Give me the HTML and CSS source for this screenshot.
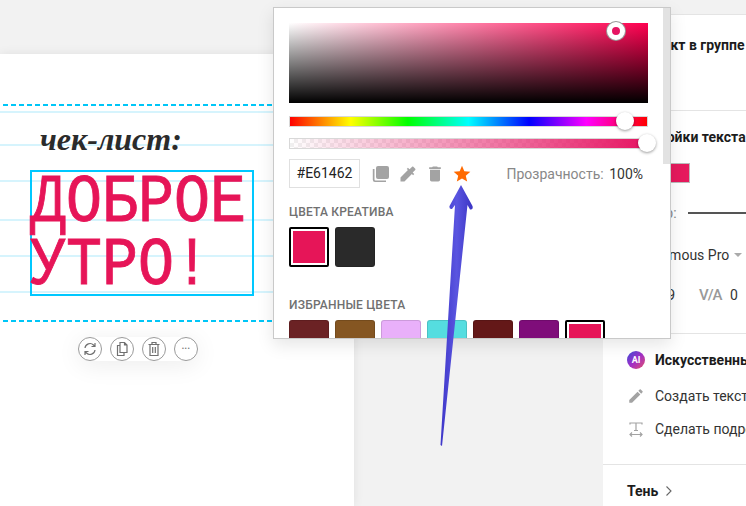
FILE: index.html
```html
<!DOCTYPE html>
<html lang="ru">
<head>
  <meta charset="UTF-8" />
  <meta name="viewport" content="width=device-width, initial-scale=1.0"/>
  <title>Редактор креатива</title>
  <link rel="stylesheet" href="styles.css">
</head>
<body>

<div class="app">
  <div class="sheet">
    <svg class="sheet-lines" width="354" height="452">
      <g class="rule">
        <line x1="0" y1="58" x2="354" y2="58"/>
        <line x1="0" y1="91" x2="354" y2="91"/>
        <line x1="0" y1="127" x2="354" y2="127"/>
        <line x1="0" y1="166" x2="354" y2="166"/>
        <line x1="0" y1="202" x2="354" y2="202"/>
        <line x1="0" y1="238" x2="354" y2="238"/>
      </g>
      <g class="dash">
        <line x1="3" y1="51" x2="354" y2="51"/>
        <line x1="3" y1="267" x2="354" y2="267"/>
      </g>
    </svg>
    <div class="heading">чек-лист:</div>
    <div class="text-box">
      <div class="text-inner">ДОБРОЕ<br>УТРО!</div>
    </div>
    <div class="tools">
      <button class="tool">
        <svg width="16" height="16" viewBox="0 0 16 16"><path d="M3 7a5 5 0 0 1 8.500-3L13 5.500M13 2v3.500H9.500M13 9a5 5 0 0 1-8.500 3L3 10.500M3 14v-3.500h3.500"/></svg>
      </button>
      <button class="tool">
        <svg width="16" height="16" viewBox="0 0 16 16"><path d="M6 1.500h4.500L13 4v7.500H6zM10.500 1.500V4H13M6 4.500H3.500v10H10v-3"/></svg>
      </button>
      <button class="tool">
        <svg width="16" height="16" viewBox="0 0 16 16"><path d="M2.500 3.500h11M6 3.500V1.500h4v2M4 3.500v11h8v-11M6.700 6v6M9.300 6v6"/></svg>
      </button>
      <button class="tool tool-more">&bull;&bull;&bull;</button>
    </div>
  </div>

  <div class="panel">
    <section class="group group-top">
      <div class="title title-object">Объект в группе</div>
    </section>

    <section class="group group-text">
      <div class="title">Настройки текста</div>
      <div class="row row-color">
        <span class="label">Цвет:</span>
        <span class="color-chip"></span>
      </div>
      <div class="row row-stroke">
        <span class="label">Контур:</span>
        <span class="stroke-line"></span>
      </div>
      <div class="row row-font">
        <span class="font-name">Famous Pro</span>
        <span class="caret"></span>
      </div>
      <div class="row row-spacing">
        <span class="spacing-value">1.19</span>
        <span class="va">V/A</span>
        <span>0</span>
      </div>
    </section>

    <section class="group group-ai">
      <div class="ai-row ai-head">
        <span class="ai-badge">AI</span>
        <span class="ai-title">Искусственный интеллект</span>
      </div>
      <div class="ai-row">
        <svg class="ai-icon" width="20" height="20" viewBox="0 0 24 24"><path d="M3 17.250V21h3.750L17.810 9.940l-3.750-3.750L3 17.250zM20.710 7.040c.390-.390.390-1.020 0-1.410l-2.340-2.340c-.390-.390-1.020-.390-1.410 0l-1.830 1.830 3.750 3.750 1.830-1.830z"/></svg>
        <span>Создать текст</span>
      </div>
      <div class="ai-row">
        <svg class="ai-icon ai-icon-line" width="16" height="16" viewBox="0 0 16 16"><path d="M2 3.500V2h12v1.500M8 2v7.500M6 9.500h4M2 13.500h12M4 11.500l-2 2 2 2M12 11.500l2 2-2 2"/></svg>
        <span>Сделать подробнее</span>
      </div>
    </section>

    <section class="group group-shadow">
      <div class="shadow-link">
        <span class="title">Тень</span>
        <svg width="8" height="12" viewBox="0 0 8 12"><path d="M1.500 1.500 6 6l-4.500 4.500"/></svg>
      </div>
    </section>
  </div>

  <div class="picker">
    <div class="picker-scroll"></div>
    <div class="sv-area">
      <span class="sv-thumb"></span>
    </div>
    <div class="slider hue">
      <span class="thumb"></span>
    </div>
    <div class="slider alpha">
      <span class="thumb"></span>
    </div>
    <div class="picker-row">
      <div class="hex">#E61462</div>
      <div class="picker-icons">
        <svg width="20" height="20" viewBox="0 0 20 20"><path d="M7 2h9a2 2 0 0 1 2 2v9a2 2 0 0 1-2 2H7a2 2 0 0 1-2-2V4a2 2 0 0 1 2-2z"/><path d="M3.500 5v10.500a1 1 0 0 0 1 1H15v1.500H4a2.200 2.200 0 0 1-2.200-2.200V5z"/></svg>
        <svg width="20" height="20" viewBox="0 0 24 24"><path d="M20.710 5.630l-2.340-2.340c-.390-.390-1.020-.390-1.410 0l-3.120 3.120-1.930-1.910-1.410 1.410 1.420 1.420L3 16.250V21h4.750l8.920-8.920 1.420 1.420 1.410-1.410-1.920-1.920 3.120-3.120c.400-.400.400-1.030.010-1.420z"/></svg>
        <svg width="20" height="20" viewBox="0 0 24 24"><path d="M6 19c0 1.100.900 2 2 2h8c1.100 0 2-.900 2-2V7H6v12zM19 4h-3.500l-1-1h-5l-1 1H5v2h14V4z"/></svg>
        <svg class="star" width="20" height="20" viewBox="0 0 24 24"><path d="M12 17.270L18.180 21l-1.640-7.030L22 9.240l-7.190-.610L12 2 9.190 8.630 2 9.240l5.460 4.730L5.820 21z"/></svg>
      </div>
      <div class="opacity"><span class="opacity-label">Прозрачность:</span> <span>100%</span></div>
    </div>

    <div class="section-label">Цвета креатива</div>
    <div class="swatches">
      <span class="swatch picked swatch-pink"></span>
      <span class="swatch swatch-dark"></span>
    </div>

    <div class="section-label section-fav">Избранные цвета</div>
    <div class="swatches">
      <span class="swatch swatch-wine"></span>
      <span class="swatch swatch-brown"></span>
      <span class="swatch swatch-lilac"></span>
      <span class="swatch swatch-cyan"></span>
      <span class="swatch swatch-maroon"></span>
      <span class="swatch swatch-purple"></span>
      <span class="swatch picked swatch-pink"></span>
    </div>
  </div>

  <svg class="arrow" width="50" height="270" viewBox="0 0 50 270">
    <defs>
      <linearGradient id="arrowFill" x1="0" y1="0" x2="1" y2="0">
        <stop offset="0" stop-color="#3f37c9"/>
        <stop offset="0.5" stop-color="#5a55e0"/>
        <stop offset="1" stop-color="#3b34c4"/>
      </linearGradient>
    </defs>
    <path class="arrow-head" d="M30 5 L18.500 26 Q18 29.500 21 29 L24 25 L9.500 265 L11 266 L36.500 25 L39 29.500 Q42.500 29.500 41.500 26z"/>
  </svg>
</div>

</body>
</html>
```

FILE: styles.css
```css
* {
  box-sizing: border-box;
}

body {
  margin: 0;
  font-family: Roboto, sans-serif;
  color: #222;
}

.app {
  position: relative;
  width: 746px;
  height: 506px;
  overflow: hidden;
  background: #f2f2f2;
  display: flex;
  justify-content: space-between;
  padding-top: 14px;
}

/* canvas */
.sheet {
  position: relative;
  width: 354px;
  margin-top: 40px;
  background: #fff;
  box-shadow: 0 0 10px rgba(0, 0, 0, 0.08);
}

.sheet-lines {
  position: absolute;
  left: 0;
  top: 0;
}

.rule line {
  stroke: #d6f4fd;
  stroke-width: 2;
}

.dash line {
  stroke: #00c6f7;
  stroke-width: 2;
  stroke-dasharray: 5 3;
}

.heading {
  position: absolute;
  left: 40px;
  top: 67px;
  font-family: "Liberation Serif", serif;
  font-style: italic;
  font-weight: bold;
  font-size: 32px;
  line-height: 36px;
  color: #2b2b2b;
}

.text-box {
  position: absolute;
  left: 30px;
  top: 116px;
  width: 224px;
  height: 126px;
  border: 2px solid #00c8ff;
}

.text-inner {
  margin-left: -2px;
  font-family: "Liberation Mono", monospace;
  font-size: 60px;
  line-height: 55px;
  color: #e61558;
  -webkit-text-stroke: 0.8px #e61558;
  white-space: nowrap;
  transform: scaleY(1.14);
  transform-origin: left top;
}

.tools {
  position: absolute;
  left: 78px;
  top: 283px;
  display: flex;
  gap: 8px;
  border-radius: 12px;
  box-shadow: 0 4px 24px rgba(0, 0, 0, 0.08);
}

.tool {
  width: 24px;
  height: 24px;
  padding: 0;
  border: 1px solid #9a9a9a;
  border-radius: 50%;
  background: #fff;
  display: flex;
  align-items: center;
  justify-content: center;
}

.tool svg {
  fill: none;
  stroke: #707070;
  stroke-width: 1.200;
}

.tool-more {
  font-family: Roboto, sans-serif;
  font-size: 7px;
  letter-spacing: 0.5px;
  color: #777;
}

/* right panel */
.panel {
  width: 143px;
  background: #fff;
  border-top: 1px solid #e4e4e4;
  font-size: 14px;
  line-height: 20px;
  white-space: nowrap;
  overflow: hidden;
}

.group {
  padding-left: 24px;
  border-bottom: 1px solid #e4e4e4;
}

.group-top {
  height: 96px;
  padding-top: 20px;
}

.title-object {
  margin-left: 9px;
}

.group-text {
  height: 223px;
  padding-top: 16px;
}

.group-ai {
  height: 131px;
  padding-top: 16px;
}

.group-shadow {
  border-bottom: none;
  padding-top: 16px;
}

.title {
  font-weight: 700;
  color: #1c1c1c;
}

.row {
  display: flex;
  align-items: center;
  height: 20px;
  position: relative;
}

.label {
  color: #888;
}

.row-color {
  margin-top: 16px;
}

.color-chip {
  position: absolute;
  left: 33px;
  top: 0;
  width: 30px;
  height: 20px;
  background: #e61a5d;
  border: 1px solid #bbb;
}

.row-stroke {
  margin-top: 20px;
}

.stroke-line {
  position: absolute;
  left: 61px;
  top: 9px;
  width: 70px;
  height: 2px;
  background: #555;
}

.row-font {
  margin-top: 22px;
}

.font-name {
  margin-left: 27px;
  color: #333;
}

.caret {
  margin-left: 5px;
  width: 0;
  height: 0;
  border-left: 4px solid transparent;
  border-right: 4px solid transparent;
  border-top: 4px solid #aaa;
}

.row-spacing {
  margin-top: 20px;
  color: #333;
}

.spacing-value {
  width: 48px;
  text-align: right;
}

.va {
  margin-left: 24px;
  margin-right: 10px;
  width: 21px;
  font-size: 15px;
  font-weight: 500;
  letter-spacing: -1px;
  color: #999;
}

.ai-row {
  display: flex;
  align-items: center;
  gap: 10px;
  height: 20px;
  margin-bottom: 13px;
  color: #333;
}

.ai-head {
  margin-bottom: 16px;
}

.ai-badge {
  flex: none;
  width: 18px;
  height: 18px;
  border-radius: 50%;
  background: linear-gradient(135deg, #3a4bd8 0%, #a02fc8 50%, #e2506a 100%);
  color: #fff;
  font-size: 9px;
  font-weight: 700;
  line-height: 18px;
  text-align: center;
}

.ai-title {
  font-weight: 700;
  color: #1c1c1c;
}

.ai-icon {
  flex: none;
  width: 18px;
  fill: #a3a3a3;
}

.ai-icon-line {
  fill: none;
  stroke: #a3a3a3;
  stroke-width: 1.200;
}

.shadow-link {
  display: flex;
  align-items: center;
  gap: 7px;
}

.shadow-link svg {
  fill: none;
  stroke: #666;
  stroke-width: 1.100;
}

/* colour picker popup */
.picker {
  position: absolute;
  left: 273px;
  top: 7px;
  width: 398px;
  height: 332px;
  padding: 15px 22px 0 15px;
  background: #fff;
  border: 1px solid #c9c9c9;
  box-shadow: 0 6px 16px rgba(0, 0, 0, 0.1);
  overflow: hidden;
}

.picker-scroll {
  position: absolute;
  right: 0;
  top: 0;
  width: 7px;
  height: 156px;
  background: #e2e2e2;
}

.sv-area {
  position: relative;
  height: 80px;
  width: 359px;
  background:
    linear-gradient(to bottom, rgba(0, 0, 0, 0), #000),
    linear-gradient(to right, #fff, #ff0050);
}

.sv-thumb {
  position: absolute;
  left: 318px;
  top: -1px;
  width: 18px;
  height: 18px;
  border: 5px solid #fff;
  border-radius: 50%;
  background: #e61462;
  box-shadow: 0 0 0 1px #999;
}

.slider {
  position: relative;
  width: 359px;
  height: 11px;
  border: 1px solid #d8d8d8;
}

.hue {
  margin-top: 13px;
  background: linear-gradient(to right, #f00 0%, #ff0 17%, #0f0 33%, #0ff 50%, #00f 67%, #f0f 83%, #f00 100%);
}

.alpha {
  margin-top: 11px;
  background:
    linear-gradient(to right, rgba(230, 20, 98, 0), #e61462),
    repeating-conic-gradient(#f0f0f0 0 25%, #fff 0 50%) 0 0 / 8px 8px;
}

.thumb {
  position: absolute;
  top: -5px;
  left: 326px;
  width: 18px;
  height: 18px;
  border-radius: 50%;
  background: #fff;
  box-shadow: 0 1px 3px rgba(0, 0, 0, 0.4);
}

.alpha .thumb {
  left: 348px;
}

.picker-row {
  display: flex;
  align-items: center;
  margin-top: 10px;
  width: 359px;
}

.hex {
  width: 71px;
  height: 29px;
  border: 1px solid #e0e0e0;
  font-size: 14px;
  line-height: 27px;
  text-align: center;
  color: #222;
}

.picker-icons {
  display: flex;
  gap: 7px;
  margin-left: 11px;
}

.picker-icons svg {
  fill: #a3a3a3;
}

.picker-icons .star {
  fill: #ff6a00;
}

.opacity {
  margin-left: auto;
  margin-right: 5px;
  font-size: 14px;
  color: #333;
  word-spacing: 2px;
}

.opacity-label {
  color: #888;
}

.section-label {
  margin-top: 16px;
  font-size: 12px;
  line-height: 16px;
  font-weight: 500;
  letter-spacing: 0.2px;
  text-transform: uppercase;
  color: #707070;
}

.section-fav {
  margin-top: 30px;
}

.swatches {
  display: flex;
  gap: 6px;
  margin-top: 7px;
}

.swatch {
  flex: none;
  width: 40px;
  height: 40px;
  border-radius: 3px;
  border: 1px solid rgba(0, 0, 0, 0.12);
}

.picked {
  border: 2px solid #000;
  box-shadow: inset 0 0 0 2px #fff;
  border-radius: 2px;
}

.swatch-pink { background: #e61558; }
.swatch-dark { background: #2a2a2a; }
.swatch-wine { background: #6b2224; }
.swatch-brown { background: #855622; }
.swatch-lilac { background: #e9b0fa; }
.swatch-cyan { background: #55dde0; }
.swatch-maroon { background: #641818; }
.swatch-purple { background: #7f0d7a; }

/* annotation */
.arrow {
  position: absolute;
  left: 431px;
  top: 180px;
}

.arrow-head {
  fill: url(#arrowFill);
}
```
